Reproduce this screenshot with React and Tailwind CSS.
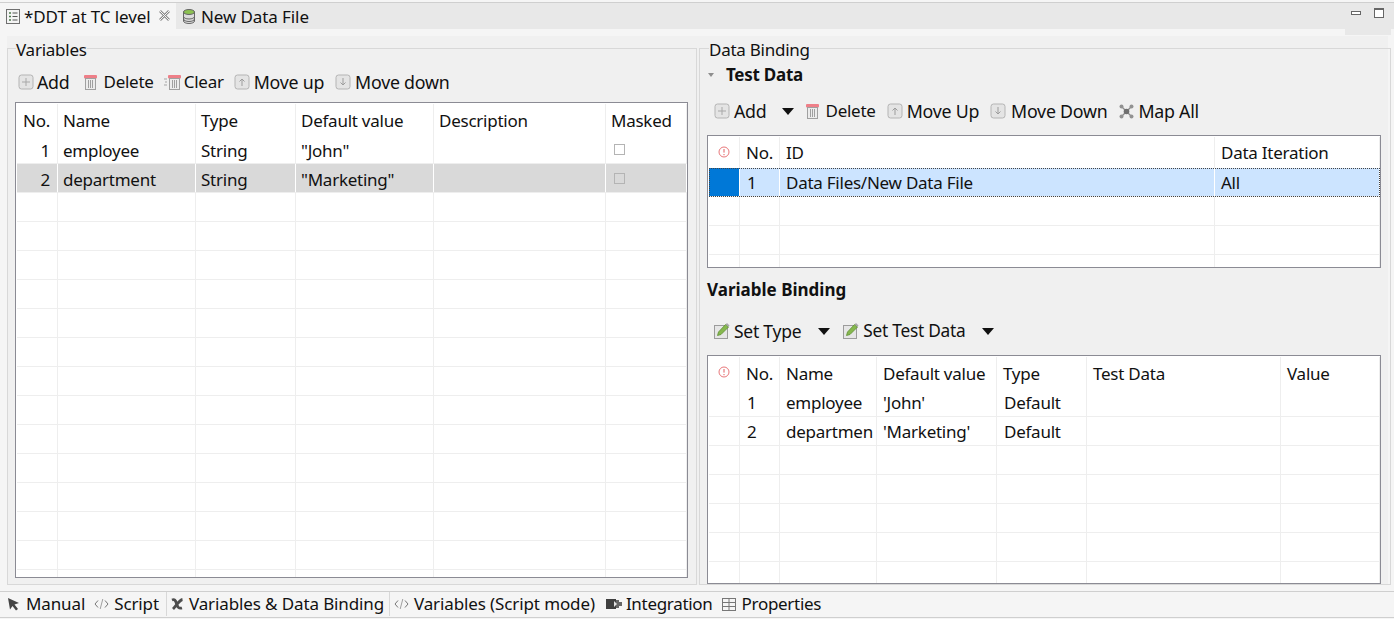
const FONT = "font-['Noto_Sans','Open_Sans',sans-serif]";

function PlusBox() {
  return (
    <svg width="16" height="16" viewBox="0 0 16 16" className="shrink-0">
      <rect x="1" y="1" width="14" height="14" rx="2.5" fill="#e4e4e4" stroke="#b4b4b4" />
      <path d="M8 4v8M4 8h8" stroke="#a8a8a8" strokeWidth="1" />
    </svg>
  );
}

function ArrowBox({ up }) {
  return (
    <svg width="16" height="16" viewBox="0 0 16 16" className="shrink-0">
      <rect x="1" y="1" width="14" height="14" rx="2.5" fill="#e4e4e4" stroke="#b4b4b4" />
      <path d={up ? 'M8 12V5M5.500 7.500L8 5l2.500 2.500' : 'M8 4v7M5.500 8.500L8 11l2.500-2.500'} stroke="#9c9c9c" fill="none" />
    </svg>
  );
}

function Trash({ lines }) {
  return (
    <svg width={lines ? 17 : 13} height="17" viewBox={lines ? '-4 0 17 17' : '0 0 13 17'} className="shrink-0">
      {lines && <path d="M-4 5h3M-3 8h2M-4 11h3" stroke="#a5a5a5" />}
      <rect x="0" y="1" width="13" height="3.500" rx="1" fill="#ee7f88" />
      <rect x="1.500" y="4.500" width="10" height="11" fill="#ececec" stroke="#a0a0a0" />
      <path d="M4.500 6v8M6.500 6v8M8.500 6v8" stroke="#9f9f9f" />
    </svg>
  );
}

function MapAll() {
  return (
    <svg width="15" height="15" viewBox="0 0 15 15" className="shrink-0">
      <path d="M2.500 2.500l10 10M12.500 2.500l-10 10" stroke="#8c8c8c" strokeWidth="1.400" />
      <circle cx="7.500" cy="7.500" r="2.800" fill="#6f6f6f" />
      <circle cx="2.500" cy="2.500" r="2" fill="#929292" />
      <circle cx="12.500" cy="2.500" r="2" fill="#929292" />
      <circle cx="2.500" cy="12.500" r="2" fill="#929292" />
      <circle cx="12.500" cy="12.500" r="2" fill="#929292" />
    </svg>
  );
}

function Pencil() {
  return (
    <svg width="16" height="16" viewBox="0 0 16 16" className="shrink-0">
      <rect x="0.500" y="2.500" width="13" height="13" fill="#e6e6e6" stroke="#9c9c9c" />
      <path d="M3.500 12.500l1-3.500 7-7.500 3 2.500-7.500 7.500z" fill="#86b84e" stroke="#5f8f34" strokeWidth="0.800" />
      <path d="M11.500 1.500l3 2.500 1-1.500-2.500-2.500z" fill="#a8a8a8" />
    </svg>
  );
}

function Caret() {
  return (
    <svg width="12" height="7" viewBox="0 0 12 7" className="shrink-0">
      <path d="M0 0h12L6 7z" fill="#111" />
    </svg>
  );
}

function ErrorMark() {
  return (
    <svg width="12" height="12" viewBox="0 0 12 12">
      <circle cx="6" cy="6" r="5" fill="#fff" stroke="#e8777a" />
      <path d="M6 3v3.600M6 8v1.200" stroke="#e05c60" />
    </svg>
  );
}

function Check() {
  return <span className="block h-[11px] w-[11px] border border-[#b4b4b4]" />;
}

function Code() {
  return (
    <svg width="15" height="12" viewBox="0 0 15 12" className="shrink-0">
      <path d="M4 2.500L1 6l3 3.500M11 2.500L14 6l-3 3.500" stroke="#777777" fill="none" />
      <path d="M8.800 1L6.200 11" stroke="#a0a0a0" />
    </svg>
  );
}

function Cursor() {
  return (
    <svg width="14" height="14" viewBox="0 0 14 14" className="shrink-0">
      <path d="M2 1l11 5-4.500 1.500L12 12l-2 1.500-3.500-4.500L4 12.500z" fill="#444" />
    </svg>
  );
}

function XVar() {
  return (
    <svg width="15" height="14" viewBox="0 0 15 14" className="shrink-0">
      <path d="M2 3c2.500-1 3.500 0 4.500 3.500S8.500 12 12 11M12.500 2.500C9.500 3 6 9 3 12" stroke="#4e4e4e" strokeWidth="2.800" fill="none" />
    </svg>
  );
}

function Plug() {
  return (
    <svg width="16" height="12" viewBox="0 0 16 12" className="shrink-0">
      <path d="M0 1h10v10H0z" fill="#3f3f3f" />
      <path d="M10 2h3v2h3v4h-3v2h-3z" fill="#666" />
      <path d="M8 3l3 3-3 3z" fill="#e4e4e4" />
    </svg>
  );
}

function PropsIcon() {
  return (
    <svg width="14" height="13" viewBox="0 0 14 13" className="shrink-0">
      <rect x="0.500" y="0.500" width="13" height="12" fill="#f5f5f5" stroke="#777" />
      <path d="M0.500 4.500h13M0.500 8.500h13M7 0.500v12" stroke="#777" />
    </svg>
  );
}

function FormIcon() {
  return (
    <svg width="14" height="15" viewBox="0 0 14 15" className="shrink-0">
      <rect x="0.500" y="0.500" width="13" height="14" fill="#f4f4f4" stroke="#6f6f6f" />
      <path d="M3 4h2M3 7.500h2M3 11h2" stroke="#4a7a4a" strokeWidth="1.400" />
      <path d="M6.500 4h5M6.500 7.500h5M6.500 11h5" stroke="#555" />
    </svg>
  );
}

function DbIcon() {
  return (
    <svg width="12" height="15" viewBox="0 0 12 15" className="shrink-0">
      <path d="M.5 3v9c0 1.400 2.500 2.500 5.500 2.500s5.500-1.100 5.500-2.500V3z" fill="#dcdcdc" stroke="#666" />
      <path d="M.5 7.500c0 1.400 2.500 2.500 5.500 2.500s5.500-1.100 5.500-2.500M.5 10c0 1.400 2.500 2.500 5.500 2.500s5.500-1.100 5.500-2.500" fill="none" stroke="#666" />
      <ellipse cx="6" cy="3" rx="5.500" ry="2.500" fill="#8cc152" stroke="#666" />
    </svg>
  );
}

function CloseIcon() {
  return (
    <svg width="11" height="11" viewBox="0 0 11 11">
      <path d="M1 1l9 9M10 1l-9 9" stroke="#8a8a8a" strokeWidth="2.600" />
      <path d="M1 1l9 9M10 1l-9 9" stroke="#f4f4f4" strokeWidth="1" />
    </svg>
  );
}

function ToolItem({ icon, label, ml, gap, size = 'text-[17.800px]' }) {
  return (
    <div className={`flex items-center ${ml} ${gap} ${size}`}>
      {icon}
      <span>{label}</span>
    </div>
  );
}

// one table row: cells sit in the same fixed column grid as the header
function Row({ cols, height, className = '', cellLine = 'border-[#eeeeee]', cells = [] }) {
  return (
    <div className={`grid ${cols} ${height} ${className}`}>
      {cells.map((c, i) => (
        <div key={i} className={`flex items-center overflow-hidden whitespace-nowrap border-r ${cellLine} ${c.className || 'pl-[6px]'}`}>
          {c.value}
        </div>
      ))}
    </div>
  );
}

function Table({ cols, colCount, header, rows, emptyRows, height, headerHeight }) {
  const blank = Array.from({ length: colCount }, () => ({ value: '' }));
  return (
    <div className={`${height} overflow-hidden border border-[#8b8b94] bg-white pl-[1px] pt-[1px]`}>
      <Row cols={cols} height={headerHeight} cells={header} />
      {rows.map((r, i) => (
        <Row key={i} cols={cols} height="h-[29px]" className={`border-b border-[#eeeeee] ${r.className || ''}`} cellLine={r.line} cells={r.cells} />
      ))}
      {Array.from({ length: emptyRows }, (_, i) => (
        <Row key={i} cols={cols} height="h-[29px]" className="border-b border-[#eeeeee]" cells={blank} />
      ))}
    </div>
  );
}

const headCell = value => ({ value, className: 'pl-[5px] pt-[2px]' });
const bodyCell = value => ({ value, className: 'pl-[5px] pt-[4px]' });
const numCell = value => ({ value, className: 'justify-end pr-[7px] pt-[4px]' });
const checkCell = { value: <Check />, className: 'pl-[8px]' };

function VariablesPanel() {
  const cols = 'grid-cols-[41px_138px_100px_138px_172px_81px]';
  return (
    <fieldset className="h-[549px] w-[690px] shrink-0 border border-[#d8d8d8] pl-[7px] pr-[8px]">
      <legend className="ml-[1px] h-[24px] leading-[28px]">Variables</legend>
      <div className="mt-[6px] flex h-[32px] items-center pl-[3px]">
        <ToolItem icon={<PlusBox />} label="Add" gap="gap-[3px]" ml="ml-0" />
        <ToolItem icon={<Trash />} label="Delete" gap="gap-[6px]" ml="ml-[15px]" size="text-[17px]" />
        <ToolItem icon={<Trash lines />} label="Clear" gap="gap-[3px]" ml="ml-[10px]" size="text-[17px]" />
        <ToolItem icon={<ArrowBox up />} label="Move up" gap="gap-[4px]" ml="ml-[10px]" />
        <ToolItem icon={<ArrowBox />} label="Move down" gap="gap-[4px]" ml="ml-[11px]" />
      </div>
      <div className="mt-[4px]">
        <Table
          cols={cols}
          colCount={6}
          height="h-[476px]"
          headerHeight="h-[31px]"
          emptyRows={14}
          header={[{ value: 'No.', className: 'pl-[6px] pt-[2px]' }, headCell('Name'), headCell('Type'), headCell('Default value'), headCell('Description'), headCell('Masked')]}
          rows={[
            { cells: [numCell('1'), bodyCell('employee'), bodyCell('String'), bodyCell('"John"'), bodyCell(''), checkCell] },
            {
              className: 'bg-[#d9d9d9]',
              line: 'border-white',
              cells: [numCell('2'), bodyCell('department'), bodyCell('String'), bodyCell('"Marketing"'), bodyCell(''), checkCell],
            },
          ]}
        />
      </div>
    </fieldset>
  );
}

function DataBindingPanel() {
  const topCols = 'grid-cols-[31px_40px_435px_165px]';
  const bottomCols = 'grid-cols-[31px_40px_97px_120px_90px_194px_99px]';
  const err = { value: <ErrorMark />, className: 'justify-center pb-[1px]' };
  const head = value => ({ value, className: 'pl-[6px] pt-[2px]' });
  const body = value => ({ value, className: 'pl-[6px] pt-[2px]' });
  const num = value => ({ value, className: 'pl-[7px] pt-[2px]' });
  const type = value => ({ value, className: 'pl-[7px] pt-[2px]' });
  return (
    <fieldset className="ml-[2px] h-[549px] w-[689px] shrink-0 border border-[#d8d8d8] pl-[7px] pr-[9px]">
      <legend className="ml-[2px] h-[24px] leading-[28px]">Data Binding</legend>
      <div className="mt-[1px] flex h-[28px] items-center">
        <svg width="6" height="6" viewBox="0 0 6 6" className="ml-[1px] shrink-0"><path d="M0 1h6L3 5z" fill="#8e8e8e" /></svg>
        <span className="ml-[12px] font-bold">Test Data</span>
      </div>
      <div className="mt-[6px] flex h-[32px] items-center pl-[7px]">
        <ToolItem icon={<PlusBox />} label="Add" gap="gap-[4px]" ml="ml-0" />
        <div className="ml-[16px] mr-[12px]"><Caret /></div>
        <ToolItem icon={<Trash />} label="Delete" gap="gap-[6px]" ml="ml-0" size="text-[17px]" />
        <ToolItem icon={<ArrowBox up />} label="Move Up" gap="gap-[4px]" ml="ml-[11px]" />
        <ToolItem icon={<ArrowBox />} label="Move Down" gap="gap-[5px]" ml="ml-[11px]" />
        <ToolItem icon={<MapAll />} label="Map All" gap="gap-[4px]" ml="ml-[12px]" />
      </div>
      <div className="mt-[8px]">
        <Table
          cols={topCols}
          colCount={4}
          height="h-[133px]"
          headerHeight="h-[31px]"
          emptyRows={3}
          header={[err, { value: 'No.', className: 'pl-[6px]' }, { value: 'ID', className: 'pl-[6px]' }, { value: 'Data Iteration', className: 'pl-[6px]' }]}
          rows={[
            {
              className: 'bg-[#cce4ff] outline-1 -outline-offset-1 outline-dotted outline-[#444444]',
              line: 'border-white',
              cells: [{ value: <span className="block h-full w-full bg-[#0078d7]" />, className: 'p-0' }, num('1'), body('Data Files/New Data File'), body('All')],
            },
          ]}
        />
      </div>
      <div className="mt-[6px] flex h-[30px] items-center pt-[1px] font-bold tracking-normal">Variable Binding</div>
      <div className="mt-[11px] flex h-[32px] items-center pl-[7px]">
        <ToolItem icon={<Pencil />} label="Set Type" gap="gap-[4px]" ml="ml-0" size="text-[17.500px]" />
        <div className="ml-[17px] mr-[13px]"><Caret /></div>
        <ToolItem icon={<Pencil />} label="Set Test Data" gap="gap-[4px]" ml="ml-0" size="text-[17.300px]" />
        <div className="ml-[17px]"><Caret /></div>
      </div>
      <div className="mt-[8px]">
        <Table
          cols={bottomCols}
          colCount={7}
          height="h-[229px]"
          headerHeight="h-[31px]"
          emptyRows={6}
          header={[err, head('No.'), head('Name'), head('Default value'), head('Type'), head('Test Data'), head('Value')]}
          rows={[
            { cells: [{ value: '' }, num('1'), body('employee'), body("'John'"), type('Default'), { value: '' }, { value: '' }] },
            { cells: [{ value: '' }, num('2'), body('departmen'), body("'Marketing'"), type('Default'), { value: '' }, { value: '' }] },
          ]}
        />
      </div>
    </fieldset>
  );
}

export default function App() {
  return (
    <div className={`flex h-[619px] w-[1394px] flex-col overflow-hidden bg-[#f5f5f5] text-[17px] tracking-[-0.25px] text-[#111111] ${FONT}`}>
      {/* Editor tabs */}
      <div className="mt-[2px] flex h-[27px] shrink-0 items-stretch border-t border-[#cfcfcf] bg-[#e8e8e8] tracking-[-0.1px]">
        <div className="flex w-[176px] items-center bg-[#f5f5f5] pl-[6px] pt-[1px]">
          <FormIcon />
          <span className="ml-[4px]">*DDT at TC level</span>
          <span className="mb-[3px] ml-[8px]"><CloseIcon /></span>
        </div>
        <div className="ml-[7px] flex items-center gap-[6px] pt-[1px]">
          <DbIcon />
          <span>New Data File</span>
        </div>
        <div className="ml-auto mr-[10px] flex items-center gap-[13px] pb-[6px]">
          <span className="block h-[4px] w-[10px] border border-[#666666] bg-white" />
          <span className="block h-[10px] w-[10px] border border-[#666666] border-t-[2px] bg-white" />
        </div>
      </div>
      <div className="flex h-[7px] shrink-0 justify-end pr-[3px]">
        <div className="h-[6px] w-[46px] bg-[#e8e8e8]" />
      </div>

      {/* Panels */}
      <div className="mb-[6px] ml-[7px] mr-[6px] flex h-[549px] shrink-0 items-start bg-[#f0f0f0]">
        <VariablesPanel />
        <DataBindingPanel />
      </div>

      {/* Bottom tabs */}
      <div className="flex h-[27px] shrink-0 items-stretch border-y border-[#cfcfcf] bg-[#f5f5f5] pb-[1px] tracking-[-0.12px]">
        <div className="flex items-center pl-[6px]"><Cursor /><span className="ml-[6px]">Manual</span></div>
        <div className="ml-[9px] flex items-center"><Code /><span className="ml-[5px]">Script</span></div>
        <div className="ml-[7px] flex w-[224px] items-center border-x border-[#d8d8d8] pl-[3px]"><XVar /><span className="ml-[4px]">Variables &amp; Data Binding</span></div>
        <div className="ml-[4px] flex items-center"><Code /><span className="ml-[5px]">Variables (Script mode)</span></div>
        <div className="ml-[11px] flex items-center"><Plug /><span className="ml-[4px] tracking-[-0.3px]">Integration</span></div>
        <div className="ml-[9px] flex items-center"><PropsIcon /><span className="ml-[6px] tracking-[-0.3px]">Properties</span></div>
      </div>
    </div>
  );
}
